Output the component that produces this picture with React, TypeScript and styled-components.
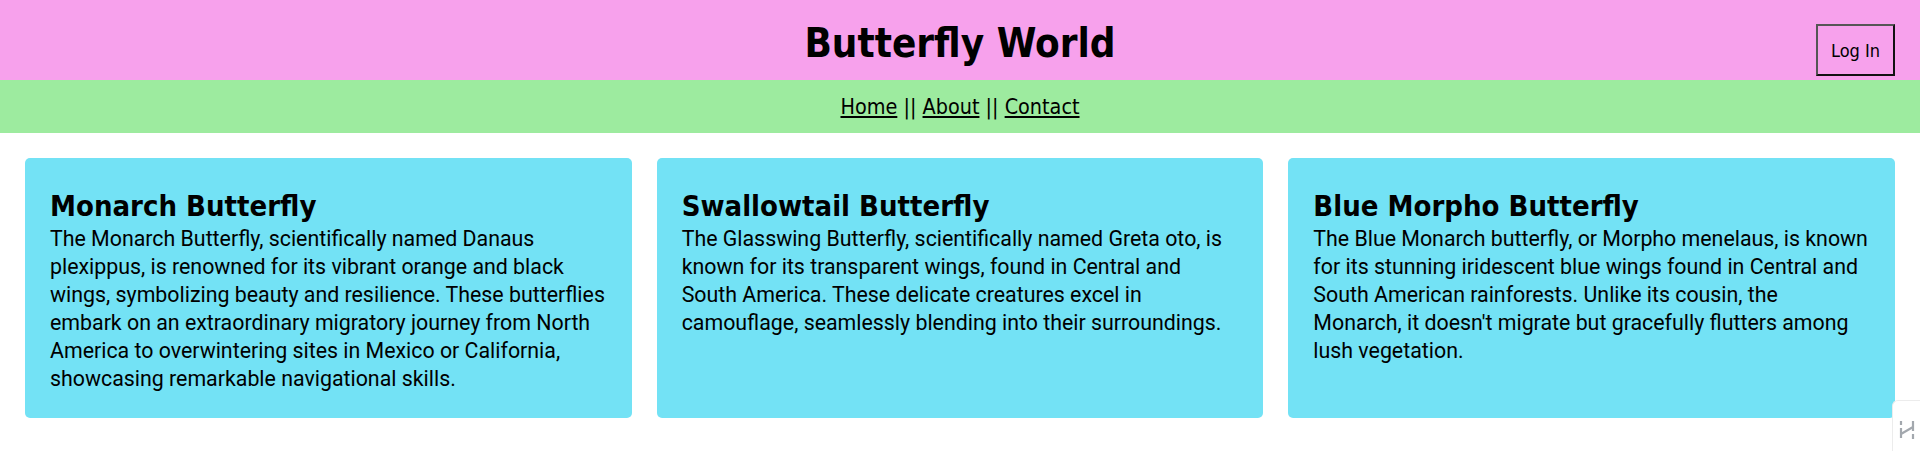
import React from "react";
import styled, { createGlobalStyle } from "styled-components";

const GlobalStyle = createGlobalStyle`
  html, body {
    margin: 0;
    padding: 0;
    background: #ffffff;
  }
  body {
    font-family: "Comic Sans MS", "DejaVu Sans Condensed", "DejaVu Sans", sans-serif;
    color: #000000;
  }
  * { box-sizing: border-box; }
`;

const Header = styled.header`
  height: 80px;
  background: #f7a1ec;
  display: grid;
  grid-template-columns: 1fr auto 1fr;
  padding: 0 25px;
`;

const Title = styled.h1`
  grid-column: 2;
  align-self: center;
  margin: 0;
  padding-top: 5px;
  font-family: "Comic Sans MS", "DejaVu Sans Condensed", "DejaVu Sans", sans-serif;
  font-size: 40px;
  font-weight: 700;
  line-height: 1.15;
  white-space: nowrap;
`;

const LoginButton = styled.button`
  grid-column: 3;
  justify-self: end;
  align-self: start;
  margin-top: 24px;
  width: 79px;
  height: 52px;
  padding: 0;
  background: transparent;
  border: 2px solid;
  border-color: #555555 #111111 #111111 #555555;
  font-family: "Comic Sans MS", "DejaVu Sans Condensed", "DejaVu Sans", sans-serif;
  font-size: 18px;
  color: #000000;
  cursor: pointer;
`;

const Nav = styled.nav`
  height: 53px;
  background: #9deb9f;
  display: flex;
  align-items: center;
  justify-content: center;
  font-size: 21.4px;
  white-space: pre;
`;

const NavLink = styled.a`
  color: #000000;
  text-decoration: underline;
`;

const Main = styled.main`
  display: flex;
  gap: 25px;
  padding: 25px;
`;

const Card = styled.section`
  flex: 1 1 0;
  background: #73e2f5;
  border-radius: 5px;
  padding: 25px;
`;

const CardTitle = styled.h2`
  margin: 0;
  padding-top: 4px;
  font-size: 29px;
  font-weight: 700;
  line-height: 38px;
`;

const CardText = styled.p`
  margin: 0;
  font-family: "Comic Sans MS", Roboto, sans-serif;
  font-size: 21.35px;
  line-height: 28px;
`;

const CornerWidget = styled.div`
  position: fixed;
  right: 0;
  bottom: 0;
  width: 28px;
  height: 51px;
  background: #ffffff;
  border-top: 1px solid #ececec;
  border-left: 1px solid #ececec;
  border-top-left-radius: 6px;
  display: flex;
  justify-content: center;
  padding-top: 19px;
`;

const cards = [
  {
    title: "Monarch Butterfly",
    text: "The Monarch Butterfly, scientifically named Danaus plexippus, is renowned for its vibrant orange and black wings, symbolizing beauty and resilience. These butterflies embark on an extraordinary migratory journey from North America to overwintering sites in Mexico or California, showcasing remarkable navigational skills.",
  },
  {
    title: "Swallowtail Butterfly",
    text: "The Glasswing Butterfly, scientifically named Greta oto, is known for its transparent wings, found in Central and South America. These delicate creatures excel in camouflage, seamlessly blending into their surroundings.",
  },
  {
    title: "Blue Morpho Butterfly",
    text: "The Blue Monarch butterfly, or Morpho menelaus, is known for its stunning iridescent blue wings found in Central and South American rainforests. Unlike its cousin, the Monarch, it doesn't migrate but gracefully flutters among lush vegetation.",
  },
];

export default function App() {
  return (
    <>
      <GlobalStyle />
      <Header>
        <Title>Butterfly World</Title>
        <LoginButton>Log In</LoginButton>
      </Header>
      <Nav>
        <NavLink href="#">Home</NavLink>
        {" || "}
        <NavLink href="#">About</NavLink>
        {" || "}
        <NavLink href="#">Contact</NavLink>
      </Nav>
      <Main>
        {cards.map((c) => (
          <Card key={c.title}>
            <CardTitle>{c.title}</CardTitle>
            <CardText>{c.text}</CardText>
          </Card>
        ))}
      </Main>
      <CornerWidget>
        <svg width="16" height="20" viewBox="0 0 16 20" fill="none" stroke="#a3a8ae" strokeWidth="2.2" strokeLinecap="butt">
          <path d="M2 1v4M2 8v10M14 1v10M14 14v5M2 14L14 7" />
        </svg>
      </CornerWidget>
    </>
  );
}
